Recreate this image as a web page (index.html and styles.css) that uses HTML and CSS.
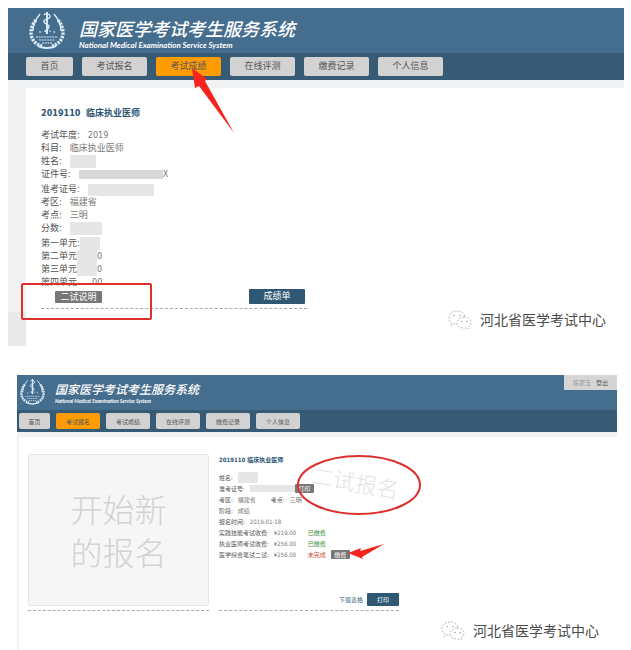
FILE: index.html
```
<!DOCTYPE html>
<html lang="zh-CN">
  <head>
    <meta charset="utf-8">
    <meta name="viewport" content="width=device-width, initial-scale=1">
    <title>国家医学考试考生服务系统</title>
    <link rel="stylesheet" href="styles.css">
  </head>
  <body>
    <svg class="sprite" width="0" height="0" aria-hidden="true">
      <symbol id="emblem" viewBox="0 0 36 38">
        <g fill="none" stroke="currentColor" stroke-width="3.4" stroke-dasharray="2.4 1">
          <path d="M7 9C0 17-1 31 13 35"/>
          <path d="M29 9c7 8 8 22-6 26"/>
        </g>
        <g fill="none" stroke="currentColor" stroke-width="1.4">
          <path d="M11 3C6 9 4 14 4 20M25 3c5 6 7 11 7 17"/>
          <path d="M18 1v22" stroke-width="2"/>
          <path d="M15 4c1-2 7-1 6 2s-7 2-6 5 6 2 5 5-4 2-3 5"/>
        </g>
        <g fill="none" stroke="currentColor" stroke-width="1">
          <path d="M10 21h3m2-1h2m3 0h2m2 1h3M7 26h22M10 29h16M13 32h10" stroke-dasharray="2 .7"/>
          <path d="M9 35q9 4 18 0" stroke-width="2"/>
        </g>
      </symbol>
      <symbol id="wechat" viewBox="0 0 24 20">
        <g fill="#fff" stroke="#aaa" stroke-width=".8" stroke-dasharray="2 1.4">
          <path d="M9 1C4 1 1 4 1 8c0 2 1 4 3 5l-1 3 3-2h3c5 0 8-3 8-6 0-4-3-7-8-7z"/>
          <path d="M16 7c-4 0-7 2-7 6 0 3 3 5 7 5h2l3 1-1-2c2-1 3-3 3-5 0-3-3-5-7-5z"/>
        </g>
        <path d="M6 5v1m6-1v1m2 5v1m5-1v1" stroke="#777" stroke-width="1"/>
      </symbol>
    </svg>

    <section class="screen score-screen">
      <header class="banner">
        <svg class="emblem"><use href="#emblem"/></svg>
        <div class="brand">
          <h1>国家医学考试考生服务系统</h1>
          <p>National Medical Examination Service System</p>
        </div>
      </header>
      <nav class="menu">
        <button class="short">首页</button>
        <button>考试报名</button>
        <button class="active">考试成绩</button>
        <button>在线评测</button>
        <button>缴费记录</button>
        <button>个人信息</button>
        <svg class="score-arrow" viewBox="0 0 42 66" aria-hidden="true">
          <path d="M0 0L15 11L13 13L42 65L7 18L3 20z" fill="#f3251c"/>
        </svg>
      </nav>
      <div class="page">
        <main class="content">
          <div class="record">
            <h2>2019110&nbsp; 临床执业医师</h2>
            <dl>
              <div><dt>考试年度:</dt><dd>2019</dd></div>
              <div><dt>科目:</dt><dd>临床执业医师</dd></div>
              <div><dt>姓名:</dt><dd><span class="mask name-mask"></span></dd></div>
              <div><dt>证件号:</dt><dd><span class="mask id-mask"></span>X</dd></div>
            </dl>
            <dl>
              <div><dt>准考证号:</dt><dd><span class="mask ticket-mask"></span></dd></div>
              <div><dt>考区:</dt><dd>福建省</dd></div>
              <div><dt>考点:</dt><dd>三明</dd></div>
              <div><dt>分数:</dt><dd><span class="mask total-mask"></span></dd></div>
            </dl>
            <dl class="units">
              <div><dt>第一单元:</dt><dd><span class="mask unit-mask"></span></dd></div>
              <div><dt>第二单元</dt><dd><span class="mask unit-mask"></span>0</dd></div>
              <div><dt>第三单元</dt><dd><span class="mask unit-mask"></span>0</dd></div>
              <div><dt>第四单元</dt><dd><span class="mask unit-mask last"></span>00</dd></div>
            </dl>
            <div class="actions">
              <button class="tag-button">二试说明</button>
              <button class="primary">成绩单</button>
              <span class="highlight"></span>
            </div>
          </div>
        </main>
      </div>
      <div class="watermark"><svg><use href="#wechat"/></svg>河北省医学考试中心</div>
    </section>

    <section class="screen signup-screen">
      <header class="banner">
        <svg class="emblem"><use href="#emblem"/></svg>
        <div class="brand">
          <h1>国家医学考试考生服务系统</h1>
          <p>National Medical Examination Service System</p>
        </div>
        <div class="account"><span>陈家玉</span><a href="#">登出</a></div>
      </header>
      <nav class="menu">
        <button class="short">首页</button>
        <button class="active">考试报名</button>
        <button>考试成绩</button>
        <button>在线评测</button>
        <button>缴费记录</button>
        <button>个人信息</button>
      </nav>
      <div class="page">
        <main class="content">
          <div class="new-entry">
            <button>开始新<br>的报名</button>
          </div>
          <div class="record">
            <h2>2019110 临床执业医师</h2>
            <dl>
              <div><dt>姓名:</dt><dd><span class="mask name-mask"></span></dd></div>
              <div><dt>准考证号:</dt><dd><span class="mask ticket-mask"></span><button class="tag-button">打印</button></dd></div>
              <div><dt>考区:</dt><dd class="area">福建省</dd><dt>考点:</dt><dd>三明</dd></div>
              <div><dt>阶段:</dt><dd>成绩</dd></div>
              <div><dt>报名时间:</dt><dd>2019-01-18</dd></div>
              <div><dt>实践技能考试收费:</dt><dd class="fee">¥219.00</dd><dd class="paid">已缴费</dd></div>
              <div><dt>执业医师考试收费:</dt><dd class="fee">¥256.00</dd><dd class="paid">已缴费</dd></div>
              <div><dt>医学综合笔试二试:</dt><dd class="fee">¥256.00</dd><dd class="unpaid">未完成</dd><dd><button class="tag-button">缴费</button></dd></div>
            </dl>
            <div class="actions">
              <a href="#">下载表格</a>
              <button class="primary">打印</button>
            </div>
            <span class="stamp">二试报名</span>
            <svg class="marks" viewBox="0 0 210 110" aria-hidden="true">
              <ellipse cx="140" cy="35" rx="61" ry="29" fill="none" stroke="#dc302c" stroke-width="2"/>
              <path d="M129 103L142 98L141 101L165 94L143 107L144 109z" fill="#f3251c"/>
            </svg>
          </div>
        </main>
      </div>
      <div class="watermark"><svg><use href="#wechat"/></svg>河北省医学考试中心</div>
    </section>
  </body>
</html>
```

FILE: styles.css
```
:root {
  --banner: #456d8e;
  --menu: #375a75;
  --button: #d3d2d2;
  --active: #ff9c05;
  --primary: #2f5874;
  --text: #555;
  --text-light: #777;
  --gutter: #f1f2f3;
  --red: #dc302c;
}

* {
  box-sizing: border-box;
}

body {
  margin: 0;
  padding: 8px 7px 0 8px;
  background: #fff;
  color: var(--text);
  font-family: "DejaVu Sans Condensed", "Noto Sans CJK SC", sans-serif;
}

h1, h2, p, dl, dd {
  margin: 0;
}

button {
  margin: 0;
  padding: 0;
  border: 0;
  font: inherit;
  color: inherit;
  cursor: pointer;
}

a {
  color: var(--text);
  text-decoration: none;
}

.sprite {
  position: absolute;
}

.screen {
  position: relative;
  font-size: 9px;
  line-height: 13px;
}

.banner {
  display: flex;
  align-items: flex-start;
  height: 45px;
  padding: 3px 0 0 20px;
  background: var(--banner);
  color: #fff;
}

.emblem {
  width: 38px;
  height: 38px;
  color: #d8eaf8;
}

.brand {
  margin: 7px 0 0 13px;
  font-family: Lato, "Noto Sans CJK SC", sans-serif;
  font-style: italic;
  white-space: nowrap;
}

.brand h1 {
  font-size: 18px;
  font-weight: 500;
  line-height: 22px;
}

.brand p {
  font-size: 8px;
  font-weight: 700;
  line-height: 10px;
}

.menu {
  position: relative;
  display: flex;
  gap: 9px;
  padding: 4px 18px;
  background: var(--menu);
}

.menu button {
  width: 65px;
  height: 19px;
  border-radius: 2px;
  background: var(--button);
}

.menu .short {
  width: 47px;
}

.menu .active {
  background: var(--active);
}

.page {
  padding: 8px 0 0 18px;
  background: linear-gradient(var(--gutter) 232px, #e9e9e9 232px);
}

.content {
  min-height: 258px;
  background: #fff;
}

.record h2 {
  color: #2d5674;
  font-size: inherit;
  font-weight: 700;
}

.record dl > div {
  display: flex;
  align-items: center;
  gap: 8px;
}

.record dd {
  display: flex;
  align-items: center;
  color: var(--text-light);
}

.mask {
  background: #e6e6e6;
}

.tag-button {
  border-radius: 1px;
  background: #777;
  color: #fff;
}

.primary {
  border-radius: 1px;
  background: var(--primary);
  color: #fff;
}

.actions {
  position: relative;
  display: flex;
  border-bottom: 1px dashed #aaa;
}

.watermark {
  position: absolute;
  display: flex;
  align-items: center;
  gap: 8px;
  color: #4a4a4a;
  font-size: 14px;
  line-height: 20px;
}

.watermark svg {
  width: 24px;
  height: 20px;
}

/* score page */

.score-screen .content {
  padding: 19px 15px 0;
}

.score-screen .record {
  width: 266px;
}

.score-screen h2 {
  margin-bottom: 9px;
}

.score-screen dl {
  margin-bottom: 2px;
}

.score-screen .name-mask {
  width: 26px;
  height: 13px;
}

.score-screen .id-mask {
  width: 84px;
  height: 9px;
  background: #d8d8d8;
}

.score-screen .ticket-mask {
  width: 66px;
  height: 12px;
}

.score-screen .total-mask {
  width: 32px;
  height: 13px;
}

.score-screen .units {
  margin-bottom: 0;
}

.score-screen .units > div {
  gap: 0;
  height: 13px;
}

.unit-mask {
  width: 20px;
  height: 13px;
}

.unit-mask.last {
  width: 15px;
  background: none;
}

.score-screen .actions {
  justify-content: space-between;
  padding: 0 2px 4px 14px;
}

.score-screen .tag-button {
  width: 47px;
  height: 12px;
  margin-top: 2px;
  line-height: 12px;
}

.score-screen .primary {
  width: 56px;
  height: 15px;
}

.score-arrow {
  position: absolute;
  left: 184px;
  top: 15px;
  width: 42px;
  height: 66px;
}

.highlight {
  position: absolute;
  left: -20px;
  top: -6px;
  width: 131px;
  height: 37px;
  border: 2px solid var(--red);
  border-radius: 2px;
}

.score-screen .watermark {
  right: 18px;
  bottom: 16px;
}

/* sign-up page */

.signup-screen {
  margin: 29px 7px 0 9px;
  font-size: 6px;
  line-height: 11px;
}

.signup-screen .banner {
  height: 35px;
  padding: 1px 0 0 3px;
}

.signup-screen .emblem {
  width: 25px;
  height: 31px;
}

.signup-screen .brand {
  margin: 6px 0 0 10px;
}

.signup-screen .brand h1 {
  font-size: 12px;
  line-height: 16px;
}

.signup-screen .brand p {
  font-size: 5px;
  line-height: 7px;
}

.account {
  position: absolute;
  top: 0;
  right: 0;
  display: flex;
  gap: 5px;
  padding: 2px 9px;
  background: #d5d5d5;
  color: #999;
}

.signup-screen .menu {
  gap: 6px;
  padding: 3px 2px;
}

.signup-screen .menu button {
  width: 44px;
  height: 16px;
}

.signup-screen .menu .short {
  width: 31px;
}

.signup-screen .page {
  padding: 5px 0 0 2px;
}

.signup-screen .content {
  display: flex;
  gap: 10px;
  min-height: 213px;
  padding: 17px 9px 0;
}

.new-entry {
  width: 181px;
  height: 157px;
  border-bottom: 1px dashed #aaa;
}

.new-entry button {
  width: 181px;
  height: 152px;
  border: 1px solid #e6e6e6;
  border-radius: 2px;
  background: #f6f6f6;
  color: #d2d2d2;
  font-family: "Noto Sans CJK SC", sans-serif;
  font-size: 32px;
  font-weight: 300;
  line-height: 43px;
}

.signup-screen .record {
  position: relative;
  display: flex;
  flex-direction: column;
  width: 180px;
  height: 157px;
}

.signup-screen h2 {
  margin-bottom: 7px;
}

.signup-screen dl > div {
  gap: 5px;
  height: 11px;
}

.signup-screen .name-mask {
  width: 20px;
  height: 11px;
}

.signup-screen .ticket-mask {
  width: 45px;
  height: 7px;
}

.signup-screen .tag-button {
  width: 19px;
  height: 9px;
  line-height: 9px;
}

.area {
  width: 28px;
}

.fee {
  width: 29px;
}

.record .paid {
  color: #3b8f3b;
}

.record .unpaid {
  color: #c8502e;
}

.signup-screen .actions {
  align-items: center;
  justify-content: flex-end;
  gap: 4px;
  margin-top: auto;
  padding-bottom: 4px;
}

.signup-screen .actions a {
  color: var(--primary);
}

.signup-screen .primary {
  width: 32px;
  height: 13px;
}

.stamp {
  position: absolute;
  left: 92px;
  top: 14px;
  color: #e3e3e3;
  font-size: 22px;
  font-weight: 300;
  line-height: 32px;
  white-space: nowrap;
  transform: rotate(10deg);
}

.marks {
  position: absolute;
  left: 0;
  top: -4px;
  width: 210px;
  height: 110px;
}

.signup-screen .watermark {
  right: 18px;
  bottom: 9px;
}
```
